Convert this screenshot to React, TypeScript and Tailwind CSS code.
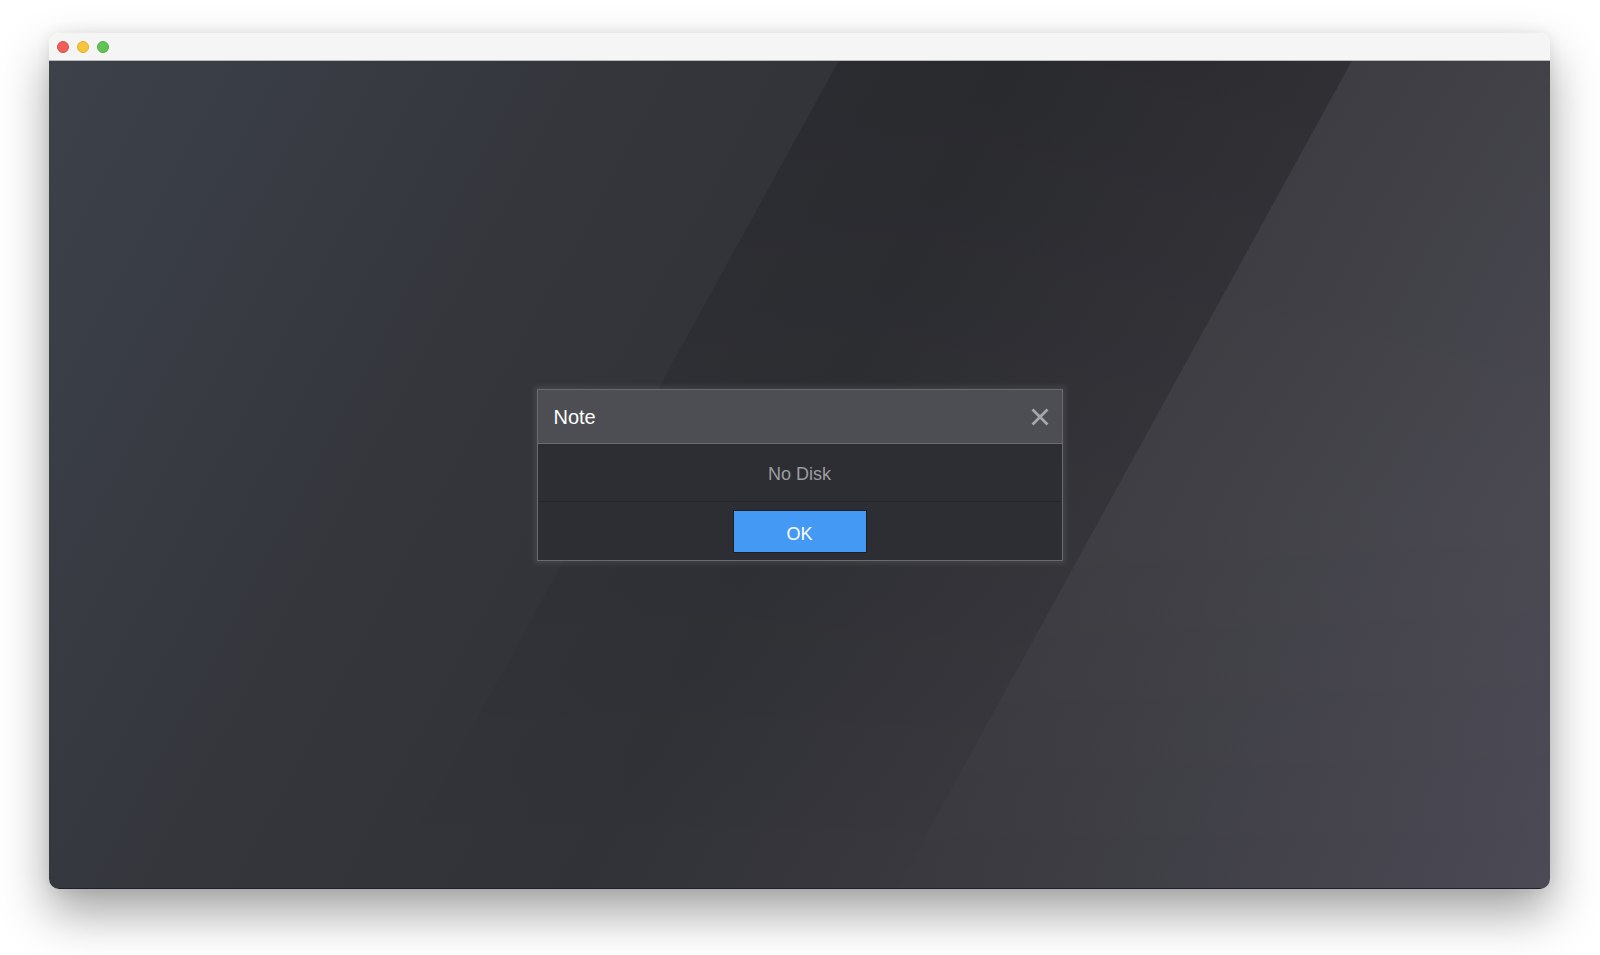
import React from "react";

export default function App() {
  return (
    <div
      className="w-[1600px] h-[955px] bg-white flex items-start justify-start pt-[33px] pl-[49px]"
      style={{ fontFamily: '"Liberation Sans", Arial, sans-serif' }}
    >
      <div className="w-[1501px] h-[856px] rounded-[10px] overflow-hidden flex flex-col shadow-[0_24px_48px_rgba(0,0,0,0.36),0_0_14px_rgba(0,0,0,0.08)]">
        {/* title bar */}
        <div className="h-[28px] shrink-0 bg-[#f5f5f5] border-b border-[#b9babd] flex items-center pl-[8px] gap-[8px]">
          <span className="w-[12px] h-[12px] rounded-full bg-[#ee5f5a] border border-[#de4c47]" />
          <span className="w-[12px] h-[12px] rounded-full bg-[#f5c63c] border border-[#e1b12d]" />
          <span className="w-[12px] h-[12px] rounded-full bg-[#5fc454] border border-[#4fb046]" />
        </div>
        {/* content */}
        <div className="relative flex-1 flex items-center justify-center pt-[1px] bg-[linear-gradient(118deg,#3c414a_0%,#34363c_28%,#313237_50%,#3a3a40_72%,#4a4954_100%)] border-b border-[#1f1f29]">
          <div className="absolute inset-0 [clip-path:polygon(52.6%_0,86.8%_0,56.5%_100%,22.3%_100%)] bg-[linear-gradient(180deg,rgba(0,0,0,0.17)_0%,rgba(0,0,0,0.09)_45%,rgba(0,0,0,0.02)_85%,rgba(0,0,0,0)_100%)]" />
          <div className="absolute inset-0 [clip-path:polygon(86.8%_0,100%_0,100%_100%,56.5%_100%)] bg-[linear-gradient(180deg,rgba(255,255,255,0.025)_0%,rgba(255,255,255,0.03)_55%,rgba(255,255,255,0.005)_100%)]" />

          {/* dialog */}
          <div className="relative w-[526px] border border-[#6a6b70] shadow-[0_0_5px_3px_rgba(255,255,255,0.08)] flex flex-col">
            <div className="h-[54px] bg-[#4d4e54] border-b border-[#6b6c71] flex items-center justify-between pl-[16px] pr-[12px]">
              <span className="text-[20px] text-white leading-none pt-[1px]">Note</span>
              <svg width="20" height="20" viewBox="0 0 20 20" className="block">
                <path d="M2.5 2.5 L17.5 17.5 M17.5 2.5 L2.5 17.5" stroke="#a7a8ac" strokeWidth="2.7" strokeLinecap="butt" />
              </svg>
            </div>
            <div className="h-[58px] bg-[#2c2e33] border-b border-[#25262a] flex items-center justify-center">
              <span className="text-[18px] text-[#9c9da1] leading-none pt-[2px]">No Disk</span>
            </div>
            <div className="h-[58px] bg-[#2c2e33] flex items-start justify-center pt-[8px]">
              <button className="w-[134px] h-[43px] bg-[#4499f5] border border-[#1f2024] text-white text-[18px] leading-none flex items-center justify-center pt-[4px]">
                OK
              </button>
            </div>
          </div>
        </div>
      </div>
    </div>
  );
}
